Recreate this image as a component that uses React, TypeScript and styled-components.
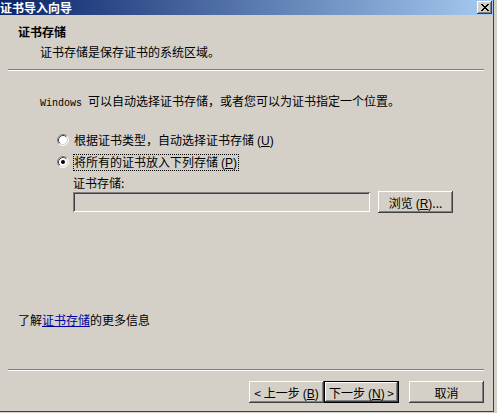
import styled, { createGlobalStyle } from 'styled-components';

const GlobalStyle = createGlobalStyle`
  html, body {
    margin: 0;
    padding: 0;
    background: #d4d0c8;
  }
  body {
    font-family: "Noto Sans CJK SC", "Liberation Sans", sans-serif;
    font-size: 12px;
    color: #000;
  }
`;

const bevelOut = `
  box-shadow: inset -1px -1px #404040, inset 1px 1px #ffffff,
    inset -2px -2px #808080, inset 2px 2px #d4d0c8;
`;

function RadioMark({ checked }: { checked?: boolean }) {
  return (
    <svg width="12" height="12" viewBox="0 0 12 12">
      <circle cx="6" cy="6" r="5" fill="#ffffff" />
      <path d="M2.11 9.89 A5.5 5.5 0 0 1 9.89 2.11" fill="none" stroke="#808080" />
      <path d="M9.89 2.11 A5.5 5.5 0 0 1 2.11 9.89" fill="none" stroke="#ffffff" />
      <path d="M2.82 9.18 A4.5 4.5 0 0 1 9.18 2.82" fill="none" stroke="#404040" />
      <path d="M9.18 2.82 A4.5 4.5 0 0 1 2.82 9.18" fill="none" stroke="#d4d0c8" />
      {checked && <circle cx="6" cy="6" r="2" fill="#000000" />}
    </svg>
  );
}

function CloseGlyph() {
  const rows = [
    [0, 1, 6, 7],
    [1, 2, 5, 6],
    [2, 3, 4, 5],
    [3, 4],
    [2, 3, 4, 5],
    [1, 2, 5, 6],
    [0, 1, 6, 7],
  ];
  return (
    <svg width="8" height="7" viewBox="0 0 8 7" shapeRendering="crispEdges">
      {rows.map((cols, y) =>
        cols.map((x) => <rect key={`${x}-${y}`} x={x} y={y} width="1" height="1" fill="#000" />)
      )}
    </svg>
  );
}

function App() {
  return (
    <>
      <GlobalStyle />
      <Window>
        <TitleBar>
          <span>证书导入向导</span>
          <CloseButton>
            <CloseGlyph />
          </CloseButton>
        </TitleBar>

        <Header>
          <HeaderTitle>证书存储</HeaderTitle>
          <HeaderSub>证书存储是保存证书的系统区域。</HeaderSub>
        </Header>
        <Separator />

        <Body>
          <Intro>
            <Latin>Windows </Latin>可以自动选择证书存储，或者您可以为证书指定一个位置。
          </Intro>

          <OptionList>
            <OptionRow>
              <RadioMark />
              <OptionLabel>
                根据证书类型，自动选择证书存储<Key>(<u>U</u>)</Key>
              </OptionLabel>
            </OptionRow>
            <OptionRow>
              <RadioMark checked />
              <OptionLabel $focused>
                将所有的证书放入下列存储<Key>(<u>P</u>)</Key>
              </OptionLabel>
            </OptionRow>
          </OptionList>

          <StoreBlock>
            <StoreLabel>证书存储:</StoreLabel>
            <StoreRow>
              <StoreInput disabled />
              <Button>
                浏览<Key>(<u>R</u>)</Key>...
              </Button>
            </StoreRow>
          </StoreBlock>

          <LinkLine>
            了解<LinkText>证书存储</LinkText>的更多信息
          </LinkLine>
        </Body>
        <Separator />

        <ButtonRow>
          <Button>
            &lt; 上一步<Key>(<u>B</u>)</Key>
          </Button>
          <Button $default>
            下一步<Key>(<u>N</u>)</Key> &gt;
          </Button>
          <CancelButton>取消</CancelButton>
        </ButtonRow>
      </Window>
    </>
  );
}

export default App;

const Window = styled.div`
  width: 494px;
  height: 412px;
  box-sizing: border-box;
  display: flex;
  flex-direction: column;
  background: #d4d0c8;
  border-right: 1px solid #404040;
  border-bottom: 1px solid #404040;
  overflow: hidden;
`;

const TitleBar = styled.div`
  height: 15px;
  flex-shrink: 0;
  display: flex;
  align-items: center;
  justify-content: space-between;
  padding: 0 1px 0 0;
  background: linear-gradient(to right, #0a246a, #a6caf0);
  color: #ffffff;
  font-weight: bold;
  font-size: 12px;
  line-height: 15px;
  white-space: nowrap;
`;

const CloseButton = styled.div`
  width: 15px;
  height: 13px;
  display: flex;
  align-items: center;
  justify-content: center;
  background: #d4d0c8;
  ${bevelOut}
`;

const Header = styled.div`
  padding: 10px 0 10px 18px;
  flex-shrink: 0;
`;

const HeaderTitle = styled.div`
  font-weight: bold;
  line-height: 14px;
`;

const HeaderSub = styled.div`
  margin: 6px 0 0 22px;
  line-height: 14px;
`;

const Separator = styled.div`
  flex-shrink: 0;
  width: 476px;
  margin-left: 8px;
  border-top: 1px solid #808080;
  border-bottom: 1px solid #ffffff;
`;

const Body = styled.div`
  flex: 1;
  display: flex;
  flex-direction: column;
  padding: 23px 0 42px 18px;
`;

const Intro = styled.div`
  margin-left: 22px;
  line-height: 14px;
  white-space: nowrap;
`;

const Latin = styled.span`
  font-family: "Liberation Mono", monospace;
  font-size: 10px;
  white-space: pre;
`;

const OptionList = styled.div`
  margin: 21px 0 0 39px;
  display: flex;
  flex-direction: column;
  gap: 6px;
`;

const OptionRow = styled.div`
  display: flex;
  align-items: center;
  gap: 4px;
  height: 16px;
`;

const OptionLabel = styled.span<{ $focused?: boolean }>`
  border: 1px dotted ${(p) => (p.$focused ? '#000000' : 'transparent')};
  padding-right: 1px;
  line-height: 14px;
  white-space: nowrap;
`;

const Key = styled.span`
  font-family: "Liberation Sans", sans-serif;
  margin-left: 3px;
`;

const StoreBlock = styled.div`
  margin: 6px 0 0 55px;
`;

const StoreLabel = styled.div`
  line-height: 14px;
`;

const StoreRow = styled.div`
  display: flex;
  align-items: center;
  gap: 8px;
  margin-top: 1px;
`;

const StoreInput = styled.input`
  width: 297px;
  height: 20px;
  box-sizing: border-box;
  margin: 0;
  border: none;
  background: #d4d0c8;
  box-shadow: inset 1px 1px #808080, inset -1px -1px #ffffff,
    inset 2px 2px #404040, inset -2px -2px #d4d0c8;
`;

const Button = styled.button<{ $default?: boolean }>`
  width: 75px;
  height: 22px;
  box-sizing: border-box;
  padding: 0;
  margin: 0;
  font-family: "Noto Sans CJK SC", "Liberation Sans", sans-serif;
  font-size: 12px;
  color: #000;
  background: #d4d0c8;
  white-space: nowrap;
  border: ${(p) => (p.$default ? '1px solid #000000' : 'none')};
  ${bevelOut}
`;

const CancelButton = styled(Button)`
  margin-left: 10px;
`;

const LinkLine = styled.div`
  margin-top: auto;
  line-height: 14px;
`;

const LinkText = styled.span`
  color: #0000a0;
  text-decoration: underline;
`;

const ButtonRow = styled.div`
  flex-shrink: 0;
  display: flex;
  padding: 10px 0 8px 249px;
`;
